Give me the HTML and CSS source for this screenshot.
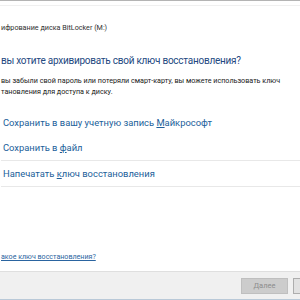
FILE: index.html
```html
<!DOCTYPE html>
<html lang="ru">
<head>
  <meta charset="UTF-8">
  <title>Шифрование диска BitLocker (M:)</title>
  <link rel="stylesheet" href="styles.css">
</head>
<body>
  <div class="window">
    <div class="titlebar"></div>

    <div class="content">
      <div class="caption">ифрование диска BitLocker (M:)</div>
      <div class="heading">вы хотите архивировать свой ключ восстановления?</div>
      <p class="desc">вы забыли свой пароль или потеряли смарт-карту, вы можете использовать ключ<br>тановления для доступа к диску.</p>

      <ul class="commands">
        <li class="command"><span>Сохранить в вашу учетную запись <u>М</u>айкрософт</span></li>
        <li class="command"><span>Сохранить в <u>ф</u>айл</span></li>
        <li class="command"><span>Напечатать <u>к</u>люч восстановления</span></li>
      </ul>

      <a class="help" href="#">акое ключ восстановления?</a>
    </div>

    <div class="footer">
      <button class="btn" disabled>Далее</button>
      <button class="btn btn-cancel">Отмена</button>
    </div>
  </div>
</body>
</html>
```

FILE: styles.css
```css
body {
  margin: 0;
  width: 300px;
  height: 300px;
  overflow: hidden;
  background: #ffffff;
  font-family: Roboto, 'Noto Sans', sans-serif;
}

.window {
  height: 300px;
  display: flex;
  flex-direction: column;
  border-top: 1px solid #b4b4b4;
  box-sizing: border-box;
  white-space: nowrap;
}

.titlebar {
  height: 4px;
  border-bottom: 1px solid #f0f0f0;
}

.content {
  flex: 1;
  display: flex;
  flex-direction: column;
  padding-left: 1px;
}

.caption {
  margin-top: 16px;
  font-size: 7.2px;
  line-height: 12px;
  color: #303030;
}

.heading {
  margin-top: 19px;
  font-size: 10px;
  letter-spacing: -0.25px;
  line-height: 16px;
  color: #23497f;
}

.desc {
  margin: 6px 0 0 0;
  font-size: 7.2px;
  line-height: 11px;
  color: #202020;
}

.commands {
  list-style: none;
  margin: 13px 0 0 0;
  padding: 0;
}

.command {
  height: 25px;
  display: flex;
  align-items: center;
  padding-left: 2px;
  font-size: 9.4px;
  color: #21609a;
}

.command:nth-child(2),
.command:nth-child(3) {
  border-bottom: 1px solid #e8e8e8;
}

.command u {
  text-decoration-thickness: 1px;
}

.help {
  margin-top: auto;
  margin-bottom: 8px;
  font-size: 7.1px;
  line-height: 12px;
  color: #2a64a0;
}

.footer {
  height: 27px;
  background: #f0f0f0;
  border-top: 1px solid #dfdfdf;
  border-bottom: 1px solid #b9c9d8;
  display: flex;
  align-items: center;
  justify-content: flex-end;
  gap: 5px;
  margin-right: -40px;
}

.btn {
  width: 47px;
  height: 16px;
  padding: 0;
  font-family: inherit;
  font-size: 7.5px;
  border: 1px solid #bfbfbf;
  background: #cccccc;
  color: #8c8c8c;
}

.btn-cancel {
  background: #e1e1e1;
  border-color: #adadad;
  color: #000000;
}
```
